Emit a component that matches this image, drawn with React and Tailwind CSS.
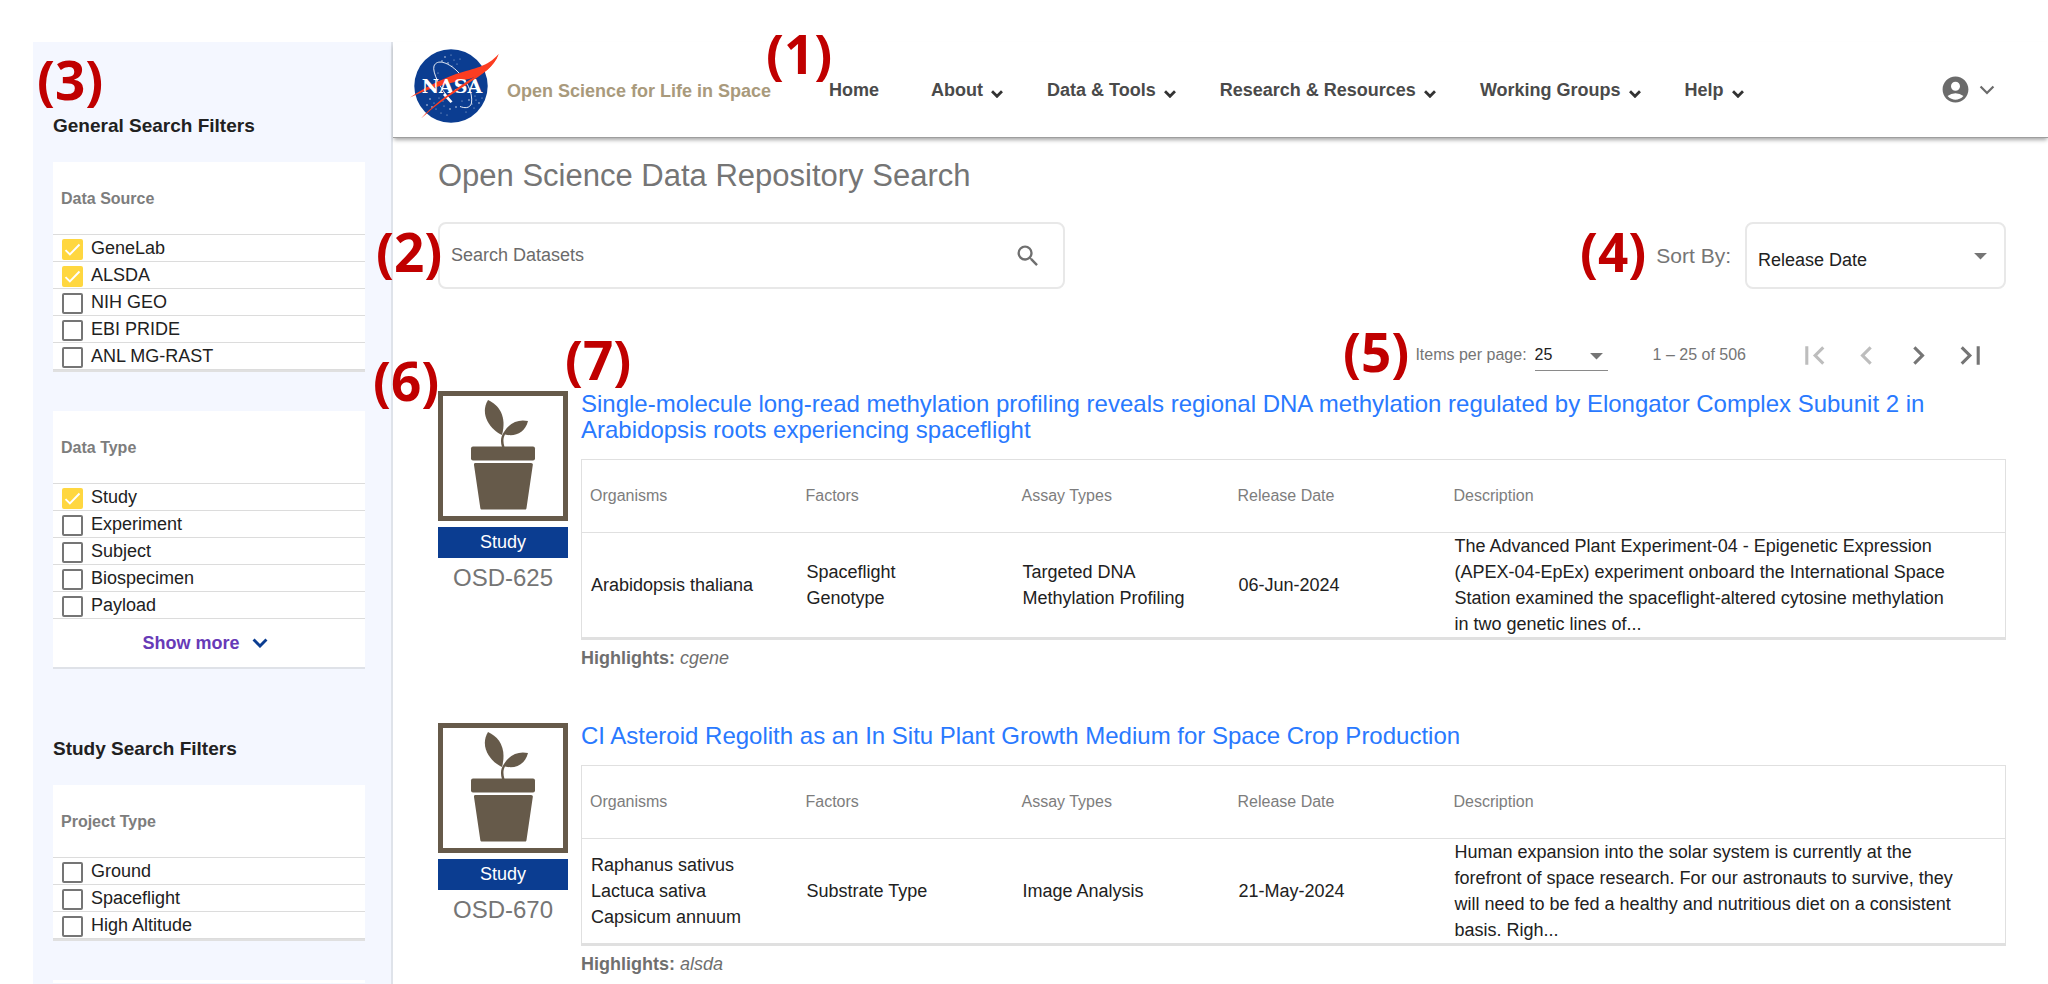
import React from "react";
import { MdAccountCircle, MdSearch, MdFirstPage, MdLastPage, MdChevronLeft, MdChevronRight, MdArrowDropDown } from "react-icons/md";

const filters = {
  source: {
    title: "Data Source",
    items: [["GeneLab", true], ["ALSDA", true], ["NIH GEO", false], ["EBI PRIDE", false], ["ANL MG-RAST", false]],
  },
  type: {
    title: "Data Type",
    items: [["Study", true], ["Experiment", false], ["Subject", false], ["Biospecimen", false], ["Payload", false]],
  },
  project: {
    title: "Project Type",
    items: [["Ground", false], ["Spaceflight", false], ["High Altitude", false]],
  },
};

const menu = ["About", "Data & Tools", "Research & Resources", "Working Groups", "Help"];

const results = [
  {
    id: "OSD-625",
    title:
      "Single-molecule long-read methylation profiling reveals regional DNA methylation regulated by Elongator Complex Subunit 2 in Arabidopsis roots experiencing spaceflight",
    organisms: ["Arabidopsis thaliana"],
    factors: ["Spaceflight", "Genotype"],
    assays: ["Targeted DNA", "Methylation Profiling"],
    date: "06-Jun-2024",
    description:
      "The Advanced Plant Experiment-04 - Epigenetic Expression (APEX-04-EpEx) experiment onboard the International Space Station examined the spaceflight-altered cytosine methylation in two genetic lines of...",
    highlight: "cgene",
  },
  {
    id: "OSD-670",
    title: "CI Asteroid Regolith as an In Situ Plant Growth Medium for Space Crop Production",
    organisms: ["Raphanus sativus", "Lactuca sativa", "Capsicum annuum"],
    factors: ["Substrate Type"],
    assays: ["Image Analysis"],
    date: "21-May-2024",
    description:
      "Human expansion into the solar system is currently at the forefront of space research. For our astronauts to survive, they will need to be fed a healthy and nutritious diet on a consistent basis. Righ...",
    highlight: "alsda",
  },
];

function Chevron({ className, width }) {
  return (
    <svg viewBox="0 0 14 9" className={className} fill="none" stroke="currentColor" strokeWidth={width} aria-hidden="true">
      <path d="M1.2 1.3 L7 7.2 L12.8 1.3" />
    </svg>
  );
}

const stars = [
  [36, 9], [42, 7], [45, 12], [39, 15], [48, 16], [51, 11], [33, 13], [29, 25], [43, 18], [21, 51], [25, 55], [30, 50],
  [18, 57], [27, 61], [35, 58], [41, 61], [38, 67], [32, 65], [47, 59], [63, 56], [67, 52], [70, 55], [65, 60], [57, 64],
  [60, 52], [73, 50], [53, 53], [23, 59], [34, 53], [66, 48],
];

function NasaLogo() {
  return (
    <svg viewBox="0 0 90 76" className="mt-1.5 h-19 w-22.5 shrink-0 self-start" role="img" aria-label="NASA">
      <circle cx="42" cy="38" r="36.7" fill="#0b3d91" />
      {stars.map(([x, y], i) => (
        <circle key={i} cx={x} cy={y} r={i % 3 ? 0.5 : 0.8} fill="#fff" opacity="0.8" />
      ))}
      <path
        d="M41 52 C31 40 23 24 25 18 C28 11 38 14 47 22 C58 32 64 45 62.500 55 C61 61 55 60 51 58.500"
        fill="none" stroke="#fff" strokeWidth="0.9"
      />
      <path d="M1 49.500 C12 42 30 32 47 26 C66 20 78 19 89.700 6 C85 19 74 27 60 31 C40 35 20 40 1 49.500 Z" fill="#fc3d21" />
      <path d="M36 45 L43.500 53.500 L41.500 55 L34 47 Z" fill="#fff" />
      <text x="43" y="45" textAnchor="middle" fill="#fff" fontSize="19" fontWeight="700" fontFamily="DejaVu Serif, serif">
        NASA
      </text>
      <path d="M89.700 6 C84 20 72 27 57 37 C40 48 27 57 12 70.500 C23 58 39 46 55 35.500 C68 27 82 20 89.700 6 Z" fill="#fc3d21" />
    </svg>
  );
}

function PlantIcon() {
  return (
    <svg viewBox="0 0 120 120" className="block h-30 w-30" fill="#665a4a" role="img" aria-label="Plant">
      <path d="M45 4 C56 9 64 20 59 39 C48 34 36 19 45 4 Z" />
      <path d="M85 25 C82 37 72 41 62 38.500 C60 42 60 46 61.500 51 L59 51 C57 45 58 40 61 36 C67 26 76 23 85 25 Z" />
      <rect x="28" y="50.500" width="64" height="14" rx="2" />
      <path d="M32 67 H88 C89.500 67 90 68 89.800 69 L83.500 112 C83.300 113 83 113.500 82 113.500 H39 C38 113.500 37.500 113 37.300 112 L31 69 C31 68 31 67 32 67 Z" />
    </svg>
  );
}

function FilterCard({ group, children }) {
  return (
    <fieldset className="bg-white">
      <legend className="float-left flex h-[73px] w-full items-center border-b border-[#dcdcdc] px-2 pt-0.5 text-[16px] font-bold text-[#7d7d7d]">
        {group.title}
      </legend>
      <ul className={children ? "clear-both" : "clear-both border-b-2 border-[#e0e0e0]"}>
        {group.items.map(([name, checked]) => (
          <li key={name} className="h-[27px] border-b border-[#dcdcdc] px-[9px]">
            <label className="flex h-full items-center gap-2">
              <span className="relative mt-0.5 h-[21px] w-[21px] shrink-0">
                <input
                  type="checkbox"
                  defaultChecked={checked}
                  className="peer block h-[21px] w-[21px] appearance-none rounded-xs border-2 border-[#757575] bg-white checked:border-[#ffd740] checked:bg-[#ffd740]"
                />
                <svg viewBox="0 0 24 24" className="pointer-events-none absolute inset-0 hidden h-[21px] w-[21px] peer-checked:block" fill="none" stroke="#fff" strokeWidth="2.2">
                  <path d="M4 12.700 L9 17.700 L20 6.300" />
                </svg>
              </span>
              <span className="text-[18px] leading-[26px] text-[#212121]">{name}</span>
            </label>
          </li>
        ))}
      </ul>
      {children}
    </fieldset>
  );
}

function Sidebar() {
  return (
    <aside className="w-[360px] shrink-0 border-r-2 border-[#dfe3ea] bg-[#f4f7ff] pr-[26px] pl-5">
      <h2 className="mt-[70px] text-[19px] leading-7 font-bold text-[#212121]">General Search Filters</h2>
      <div className="mt-[22px]">
        <FilterCard group={filters.source} />
      </div>
      <div className="mt-[39px]">
        <FilterCard group={filters.type}>
          <button type="button" className="flex h-[50px] w-full items-center justify-center gap-3 border-b-2 border-[#dfe2e8] pr-2 text-[18px] font-bold text-[#673ab7]">
            Show more
            <Chevron className="h-[10px] w-4 text-[#0b3d91]" width="2.6" />
          </button>
        </FilterCard>
      </div>
      <h2 className="mt-[66px] text-[19px] leading-7 font-bold text-[#212121]">Study Search Filters</h2>
      <div className="mt-[22px]">
        <FilterCard group={filters.project} />
      </div>
      <div className="mt-[39px] h-[3px] bg-white" />
    </aside>
  );
}

function Header() {
  return (
    <header className="flex h-24 items-center border-b border-[#9e9e9e] pr-[53px] pl-4 shadow-[0_3px_4px_-1px_rgba(0,0,0,0.35)]">
      <NasaLogo />
      <a href="#" className="ml-2 pt-1 text-[18px] font-bold text-[#a99a7c]">Open Science for Life in Space</a>
      <nav className="ml-[58px] flex items-center gap-11 pt-0.5 text-[18px] font-bold text-[#4a4a4a]">
        <a href="#" className="mr-2">Home</a>
        {menu.map((name) => (
          <button key={name} type="button" className="flex items-center gap-2">
            {name}
            <Chevron className="mt-1.5 h-2 w-3 text-[#333]" width="3.2" />
          </button>
        ))}
      </nav>
      <button type="button" aria-label="Account" className="ml-auto flex items-center gap-2 text-[#6b6b6b]">
        <MdAccountCircle className="h-[31px] w-[31px]" />
        <Chevron className="h-[10px] w-4" width="2" />
      </button>
    </header>
  );
}

function Pager() {
  return (
    <div className="flex h-10 items-center justify-end pr-[17px] text-[16px] text-[#757575]">
      <label htmlFor="per-page">Items per page:</label>
      <span className="relative ml-2 w-[73px] border-b border-[#8a8a8a]">
        <select id="per-page" defaultValue="25" className="block h-[30px] w-full appearance-none bg-transparent text-[16px] text-[#212121]">
          <option>25</option>
        </select>
        <MdArrowDropDown className="pointer-events-none absolute top-0 -right-1 h-[31px] w-[31px]" />
      </span>
      <span className="ml-[45px]">1 – 25 of 506</span>
      <div className="ml-[50px] flex gap-[15px]">
        <button type="button" disabled aria-label="First page" className="text-[#bdbdbd]"><MdFirstPage className="h-[37px] w-[37px]" /></button>
        <button type="button" disabled aria-label="Previous page" className="text-[#bdbdbd]"><MdChevronLeft className="h-[37px] w-[37px]" /></button>
        <button type="button" aria-label="Next page"><MdChevronRight className="h-[37px] w-[37px]" /></button>
        <button type="button" aria-label="Last page"><MdLastPage className="h-[37px] w-[37px]" /></button>
      </div>
    </div>
  );
}

function Lines({ items }) {
  return items.map((t) => <div key={t}>{t}</div>);
}

function Result({ item }) {
  return (
    <article className="flex min-h-[332px] gap-[13px]">
      <div className="flex w-[130px] shrink-0 flex-col items-center">
        <div className="border-5 border-[#665a4a]">
          <PlantIcon />
        </div>
        <div className="mt-1.5 flex h-[31px] w-full items-center justify-center bg-[#0b3d91] text-[18px] text-white">Study</div>
        <div className="mt-1 text-[24px] leading-8 text-[#757575]">{item.id}</div>
      </div>
      <div className="min-w-0 flex-1">
        <h3 className="text-[24px] leading-[26px]">
          <a href="#" className="text-[#2979ff]">{item.title}</a>
        </h3>
        <table className="mt-4 w-full table-fixed border-collapse border border-b-3 border-[#e0e0e0] text-left">
          <thead>
            <tr className="h-[73px] border-b border-[#e0e0e0] text-[16px] text-[#7d7d7d]">
              <th className="w-[216px] pl-2 font-medium">Organisms</th>
              <th className="w-[216px] pl-2 font-medium">Factors</th>
              <th className="w-[216px] pl-2 font-medium">Assay Types</th>
              <th className="w-[216px] pl-2 font-medium">Release Date</th>
              <th className="pl-2 font-medium">Description</th>
            </tr>
          </thead>
          <tbody>
            <tr className="text-[18px] leading-[26px] text-[#212121]">
              <td className="pl-[9px]"><Lines items={item.organisms} /></td>
              <td className="pl-[9px]"><Lines items={item.factors} /></td>
              <td className="pl-[9px]"><Lines items={item.assays} /></td>
              <td className="pl-[9px]">{item.date}</td>
              <td className="pr-12 pl-[9px]">{item.description}</td>
            </tr>
          </tbody>
        </table>
        <p className="mt-[5px] text-[18px] leading-[26px] text-[#6f6f6f]">
          <strong>Highlights:</strong> <em>{item.highlight}</em>
        </p>
      </div>
    </article>
  );
}

const marks = [
  ["(1)", "left-[766px] top-[22px]"],
  ["(2)", "left-[376px] top-[220px]"],
  ["(3)", "left-[37px] top-[48px]"],
  ["(4)", "left-[1580px] top-[220px]"],
  ["(5)", "left-[1343px] top-[320px]"],
  ["(6)", "left-[373px] top-[349px]"],
  ["(7)", "left-[565px] top-[328px]"],
];

export default function App() {
  return (
    <div className="relative h-screen overflow-hidden bg-white pt-[42px] pl-[33px] font-['Liberation_Sans',Arial,sans-serif]">
      <div className="flex h-full">
        <Sidebar />
        <div className="min-w-0 flex-1">
          <Header />
          <main className="pr-[42px] pl-[45px]">
            <h1 className="mt-[18px] text-[31px] leading-10 text-[#757575]">Open Science Data Repository Search</h1>
            <div className="mt-[26px] flex items-center justify-between">
              <div className="relative w-[627px]">
                <input
                  type="text"
                  aria-label="Search Datasets"
                  placeholder="Search Datasets"
                  className="block h-[67px] w-full rounded-lg border-2 border-[#e8e8e8] px-[11px] text-[18px] placeholder:text-[#6b6b6b]"
                />
                <button type="button" aria-label="Search" className="absolute top-5 right-[23px] text-[#6f6f6f]">
                  <MdSearch className="h-[28px] w-[28px]" />
                </button>
              </div>
              <div className="flex items-center gap-[14px]">
                <label htmlFor="sort" className="text-[21px] text-[#757575]">Sort By:</label>
                <div className="relative w-[261px]">
                  <select id="sort" defaultValue="Release Date" className="block h-[67px] w-full appearance-none rounded-lg border-2 border-[#e8e8e8] bg-white px-[11px] pt-2.5 text-[18px] text-[#212121]">
                    <option>Release Date</option>
                  </select>
                  <MdArrowDropDown className="pointer-events-none absolute top-[18px] right-2.5 h-[31px] w-[31px] text-[#757575]" />
                </div>
              </div>
            </div>
            <div className="mt-[46px]">
              <Pager />
            </div>
            <div className="mt-4">
              {results.map((item) => (
                <Result key={item.id} item={item} />
              ))}
            </div>
          </main>
        </div>
      </div>
      {marks.map(([text, place]) => (
        <span key={text} className={`absolute font-['Open_Sans',sans-serif] text-[53px] leading-[64px] font-bold text-[#c00000] ${place}`}>
          {text}
        </span>
      ))}
    </div>
  );
}
